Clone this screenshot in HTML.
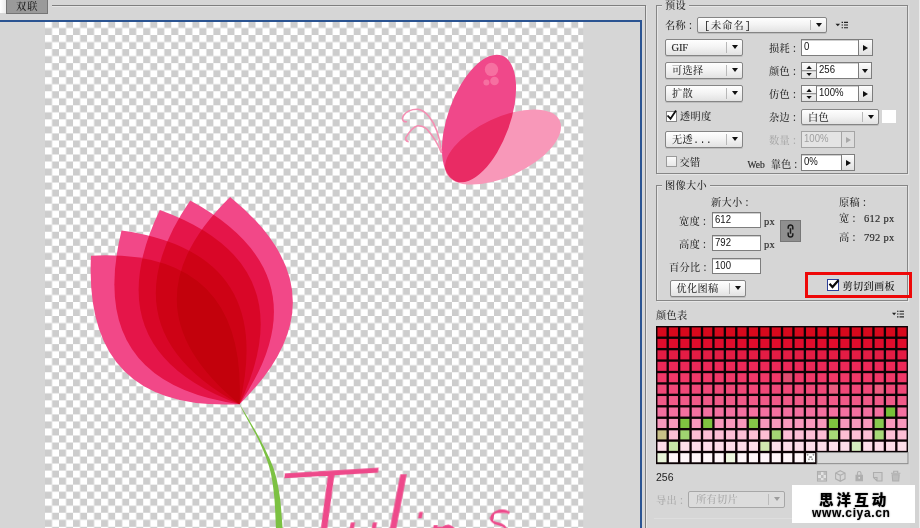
<!DOCTYPE html>
<html lang="zh-CN"><head><meta charset="utf-8"><title>存储为 Web 所用格式</title>
<style>
html,body{margin:0;padding:0;background:#d6d6d6}
html{overflow:hidden}
body{width:920px;height:528px;overflow:hidden;position:relative;background:#d6d6d6;
 font-family:"Liberation Sans","Noto Serif CJK SC",serif;font-size:10.5px;color:#2a2a2a;line-height:12px}
.a{position:absolute;white-space:nowrap}
.cj{font-family:"Liberation Mono","Noto Serif CJK SC",serif;font-size:10.2px;letter-spacing:0.3px;margin-top:1.5px;font-weight:500}
.lt{font-family:"Liberation Serif",serif;letter-spacing:0.3px;font-size:10.5px;font-weight:normal;-webkit-text-stroke:0.15px #2a2a2a}
.co{margin-left:2px}
.dd{position:absolute;box-sizing:border-box;border:1px solid #858585;border-radius:2px;
 background:linear-gradient(#fefefe,#f4f4f4 45%,#e2e2e2);box-shadow:0 1px 0 #bdbdbd}
.dd i{position:absolute;top:2px;bottom:2px;width:1px;background:#b8b8b8;right:15px}
.dd b{position:absolute;right:4px;top:5px;width:0;height:0;border-left:3.5px solid transparent;border-right:3.5px solid transparent;border-top:4.5px solid #111}
.dd span{position:absolute;left:6px;top:1.5px}
.in{position:absolute;box-sizing:border-box;border:1px solid #7d7d7d;background:#fff;box-shadow:inset 0 1px 0 #cfcfcf}
.in span{position:absolute;left:2.300px;top:1.400px;font-family:"Liberation Sans",sans-serif;font-size:10.300px;color:#111;transform:scaleX(0.93);transform-origin:0 0}
.ab{position:absolute;box-sizing:border-box;border:1px solid #7d7d7d;border-left:none;background:linear-gradient(#fdfdfd,#e0e0e0)}
.ab b{position:absolute;left:4px;top:4.6px;width:0;height:0;border-top:3.400px solid transparent;border-bottom:3.400px solid transparent;border-left:5px solid #111}
.ab b.d{left:3px;top:5.5px;border-left:3.5px solid transparent;border-right:3.5px solid transparent;border-top:4.5px solid #111;border-bottom:none}
.fs{position:absolute;box-sizing:border-box;border:1px solid #868686;box-shadow:1px 1px 0 #e6e6e6, inset 1px 1px 0 #e6e6e6}
.lg{position:absolute;background:#d6d6d6;padding:0 3px}
.cb{position:absolute;box-sizing:border-box;width:11px;height:11px;border:1px solid #6a6a6a;background:#fff}
.pt{fill:#f24888;mix-blend-mode:multiply}
</style></head><body>

<!-- left panel chrome -->
<div class="a" style="left:0;top:0;width:6px;height:13px;background:linear-gradient(90deg,#fff,#ececec)"></div>
<div class="a" style="left:6px;top:-1px;width:42px;height:14.5px;box-sizing:border-box;background:#9a9a9a;border:1px solid #757575"></div>
<div class="a cj" style="left:16px;top:0px;color:#1a1a1a;letter-spacing:1px">双联</div>
<div class="a" style="left:52px;top:5px;width:594px;height:1px;background:#7f7f7f"></div>
<div class="a" style="left:52px;top:6px;width:593px;height:1px;background:#e6e6e6"></div>
<div class="a" style="left:645px;top:5px;width:1px;height:523px;background:#7f7f7f"></div>
<div class="a" style="left:646px;top:6px;width:1px;height:522px;background:#e6e6e6"></div>
<!-- canvas -->
<svg class="a" style="left:0;top:0" width="920" height="528"><defs><pattern id="ck" x="45" y="21" width="14.032" height="14.05" patternUnits="userSpaceOnUse"><rect width="14.032" height="14.05" fill="#fff"/><rect x="7.016" width="7.016" height="7.025" fill="#cdcdcd"/><rect y="7.025" width="7.016" height="7.025" fill="#cdcdcd"/></pattern></defs><rect x="45" y="21" width="538.2" height="507" fill="url(#ck)"/></svg>
<div class="a" style="left:0;top:20px;width:642px;height:2px;background:#2b5492"></div>
<div class="a" style="left:640px;top:20px;width:2px;height:508px;background:#2b5492"></div>

<svg class="a" style="left:0;top:0" width="920" height="528" viewBox="0 0 920 528">
<defs><filter id="thin" x="-5%" y="-5%" width="110%" height="110%"><feMorphology operator="erode" radius="2"/></filter><clipPath id="cv"><rect x="45" y="22" width="538.200" height="506"/></clipPath></defs>
<g clip-path="url(#cv)">
<path d="M239.5 404C240.5 406.0 242.2 409.7 245.5 416.0C248.8 422.3 255.5 433.3 259.5 442.0C263.5 450.7 267.2 459.6 269.6 468.3C272.0 477.0 273.0 485.7 274.0 494.4C275.0 503.1 275.3 514.6 275.6 520.5C275.9 526.4 275.9 528.4 276.0 530.0L282.6 530C282.5 528.4 282.5 526.4 282.0 520.5C281.5 514.6 280.9 503.1 279.5 494.4C278.1 485.7 276.5 477.0 273.5 468.3C270.5 459.6 265.9 450.7 261.5 442.0C257.1 433.3 250.5 422.3 246.8 416.0C243.1 409.7 240.7 406.0 239.5 404.0Z" fill="#7cc142"/>
<g style="isolation:isolate">
<path class="pt" d="M239.5 404.2Q247.3 247.9 91.0 255.7Q83.2 412.0 239.5 404.2Z"/>
<path class="pt" d="M239.5 404.2Q276.4 252.2 121.5 230.5Q84.5 382.6 239.5 404.2Z"/>
<path class="pt" d="M239.5 404.2Q307.0 263.0 159.8 209.9Q92.3 351.1 239.5 404.2Z"/>
<path class="pt" d="M239.5 404.2Q327.6 275.1 190.2 200.6Q102.1 329.7 239.5 404.2Z"/>
<path class="pt" d="M239.5 404.2Q350.7 295.3 230.1 196.9Q118.9 305.8 239.5 404.2Z"/>
</g>
<!-- butterfly -->
<g style="isolation:isolate">
<ellipse cx="503" cy="147" rx="62.5" ry="29.5" transform="rotate(-25 503 147)" fill="#f898b9" style="mix-blend-mode:multiply"/>
<ellipse cx="479" cy="118.5" rx="31" ry="67" transform="rotate(20 479 118.5)" fill="#f0488a" style="mix-blend-mode:multiply"/>
</g>
<circle cx="491.5" cy="69.4" r="6.7" fill="#f670a1"/>
<circle cx="486.4" cy="82.4" r="3" fill="#f670a1"/>
<circle cx="494.5" cy="81" r="4.3" fill="#f670a1"/>
<path d="M441.6 151.8Q438.5 128 429 116.6Q424 110 417.700 109.200Q408 109 403.500 115.500Q401.500 119 403.500 121Q405 122 406.400 121.700" fill="none" stroke="#f58fb3" stroke-width="1.6" stroke-linecap="round"/>
<path d="M441.300 152.500Q436.500 140 426.800 129Q422.500 125.500 417.700 125.700Q412 127 405.800 137.600Q405 140.500 408 141.600" fill="none" stroke="#f58fb3" stroke-width="1.6" stroke-linecap="round"/>
<!-- Tulips script -->
<text font-family="'DejaVu Sans Light','DejaVu Sans',sans-serif" font-weight="200" fill="#ee4a8b" stroke="#ee4a8b" stroke-width="0" transform="translate(97.2 0) skewX(-11)" filter="url(#thin)"><tspan x="282.500" y="594.500" font-size="167" rotate="-3.5" stroke-width="2.3">T</tspan><tspan x="349.5" y="556" font-size="60" stroke-width="5.5" rotate="0">u</tspan><tspan x="377.3" y="594" font-size="157" stroke-width="3.3">l</tspan><tspan x="403.2" y="625" font-size="150" stroke-width="1">i</tspan><tspan x="432.4" y="559" font-size="60" stroke-width="5.5">p</tspan><tspan x="490" y="538" font-size="50" stroke-width="5.5">s</tspan></text>
</g>
</svg>

<!-- ============ right panel ============ -->
<div class="a" style="left:909.500px;top:0;width:9.500px;height:528px;background:#d3d3d3"></div>
<div class="a" style="left:919px;top:0;width:1px;height:528px;background:#ececec"></div>
<div class="fs" style="left:656px;top:5px;width:252px;height:169px"></div>
<div class="lg cj" style="left:662px;top:-1px">预设</div>

<div class="a cj" style="left:665px;top:19px">名称<span class="co">：</span></div>
<div class="dd" style="left:697px;top:17px;width:130px;height:16px"><span class="cj" style="letter-spacing:1px">[未命名]</span><i></i><b></b></div>
<svg class="a" style="left:834px;top:20px" width="16" height="10"><path d="M1.500 3.700h4.600l-2.300 2.600z" fill="#222"/><path d="M7.600 2.300h1.400M7.600 5h1.400M7.600 7.700h1.400M10 2.300h4M10 5h4M10 7.700h4" stroke="#222" stroke-width="1.150"/></svg>

<div class="dd" style="left:665px;top:39.0px;width:78px;height:17px"><span class="cj lt" style="left:5.500px;top:0.700px;letter-spacing:-0.200px">GIF</span><i></i><b></b></div>
<div class="dd" style="left:665px;top:62.0px;width:78px;height:17px"><span class="cj">可选择</span><i></i><b></b></div>
<div class="dd" style="left:665px;top:85.0px;width:78px;height:17px"><span class="cj">扩散</span><i></i><b></b></div>
<div class="cb" style="left:665.500px;top:110.700px;border-color:#858585"></div>
<svg class="a" style="left:665.300px;top:108.300px" width="14" height="14"><path d="M2.5 7.5l3 3.2l5.5 -8.2" fill="none" stroke="#111" stroke-width="1.8"/></svg>
<div class="a cj" style="left:680px;top:110px">透明度</div>
<div class="dd" style="left:665px;top:131px;width:78px;height:16.5px"><span class="cj">无透...</span><i></i><b></b></div>
<div class="cb" style="left:665.500px;top:156px;border-color:#9a9a9a;background:linear-gradient(#fafafa,#e8e8e8)"></div>
<div class="a cj" style="left:679.500px;top:156px">交错</div>

<div class="a cj" style="left:769px;top:42px">损耗<span class="co">：</span></div>
<div class="in" style="left:801px;top:39.0px;width:58px;height:17px"><span>0</span></div>
<div class="ab" style="left:859px;top:39.0px;width:14px;height:17px"><b></b></div>

<div class="a cj" style="left:769px;top:65px">颜色<span class="co">：</span></div>
<div class="in" style="left:801px;top:62.0px;width:58px;height:17px"><span style="left:17px">256</span></div>
<div class="a" style="left:802px;top:63px;width:14px;height:15px;border-right:1px solid #7d7d7d;background:linear-gradient(#fdfdfd,#e2e2e2)"></div>
<svg class="a" style="left:802px;top:62.700px" width="14" height="16"><path d="M4.4 5.9h5.4l-2.7 -3.1zM4.4 9.9h5.4l-2.7 3.1z" fill="#111"/><path d="M0 7.75h14" stroke="#7d7d7d" stroke-width="1"/></svg>
<div class="ab" style="left:859px;top:62.0px;width:13px;height:17px"><b class="d"></b></div>

<div class="a cj" style="left:769px;top:88px">仿色<span class="co">：</span></div>
<div class="in" style="left:801px;top:85.0px;width:58px;height:17px"><span style="left:17px">100%</span></div>
<div class="a" style="left:802px;top:86px;width:14px;height:15px;border-right:1px solid #7d7d7d;background:linear-gradient(#fdfdfd,#e2e2e2)"></div>
<svg class="a" style="left:802px;top:85.700px" width="14" height="16"><path d="M4.4 5.9h5.4l-2.7 -3.1zM4.4 9.9h5.4l-2.7 3.1z" fill="#111"/><path d="M0 7.75h14" stroke="#7d7d7d" stroke-width="1"/></svg>
<div class="ab" style="left:859px;top:85.0px;width:14px;height:17px"><b></b></div>

<div class="a cj" style="left:769px;top:111px">杂边<span class="co">：</span></div>
<div class="dd" style="left:801px;top:108.500px;width:77.500px;height:16px"><span class="cj" style="top:1.500px">白色</span><i></i><b style="top:5.500px"></b></div>
<div class="a" style="left:882px;top:109.800px;width:13.800px;height:13px;background:#fff"></div>

<div class="a cj" style="left:769px;top:134px;color:#a9a9a9">数量<span class="co">：</span></div>
<div class="in" style="left:801px;top:131px;width:41px;height:16.5px;background:#e4e4e4;border-color:#a5a5a5;box-shadow:none"><span style="color:#a0a0a0">100%</span></div>
<div class="ab" style="left:842px;top:131px;width:13px;height:16.5px;border-color:#a5a5a5;background:#dedede"><b style="border-left-color:#a8a8a8"></b></div>

<div class="a cj" style="left:747.500px;top:157px;letter-spacing:0"><span class="lt" style="font-size:9.500px;letter-spacing:0">Web</span> 靠色<span class="co">：</span></div>
<div class="in" style="left:801px;top:154px;width:41px;height:16.5px"><span>0%</span></div>
<div class="ab" style="left:842px;top:154px;width:13px;height:16.5px"><b></b></div>

<!-- image size -->
<div class="fs" style="left:656px;top:185px;width:252px;height:116px"></div>
<div class="lg cj" style="left:662px;top:179.5px">图像大小</div>
<div class="a cj" style="left:711px;top:196px">新大小<span class="co">：</span></div>
<div class="a cj" style="left:839px;top:196px">原稿<span class="co">：</span></div>
<div class="a cj" style="left:679px;top:215px">宽度<span class="co">：</span></div>
<div class="in" style="left:712px;top:211.5px;width:49px;height:16.500px"><span>612</span></div>
<div class="a cj" style="left:764px;top:214.200px"><span class="lt">px</span></div>
<div class="a cj" style="left:839px;top:211px">宽<span class="co">：</span><span class="lt" style="margin-left:2px">612 px</span></div>
<div class="a cj" style="left:679px;top:238px">高度<span class="co">：</span></div>
<div class="in" style="left:712px;top:234.5px;width:49px;height:16.500px"><span>792</span></div>
<div class="a cj" style="left:764px;top:237.200px"><span class="lt">px</span></div>
<div class="a cj" style="left:839px;top:230px">高<span class="co">：</span><span class="lt" style="margin-left:2px">792 px</span></div>
<div class="a" style="left:780px;top:220px;width:21px;height:21.5px;box-sizing:border-box;background:#8f8f8f;border:1px solid #777"></div>
<svg class="a" style="left:780px;top:220px" width="21" height="22"><path d="M8.2 8.8v-1.6a2.3 2.3 0 0 1 4.6 0v2.2M12.8 13.2v1.6a2.3 2.3 0 0 1 -4.6 0v-2.2M10.5 8.3v5.4" fill="none" stroke="#1c1c1c" stroke-width="1.5"/></svg>
<div class="a cj" style="left:669px;top:261px">百分比<span class="co">：</span></div>
<div class="in" style="left:712px;top:257.5px;width:49px;height:16.500px"><span>100</span></div>
<div class="dd" style="left:669.5px;top:280px;width:76px;height:16.5px"><span class="cj" style="left:6px">优化图稿</span><i></i><b></b></div>

<div class="a" style="left:805px;top:271.800px;width:107.400px;height:26px;box-sizing:border-box;border:3px solid #ee0808"></div>
<div class="cb" style="left:827px;top:279px;width:12.300px;height:12px;border:1.500px solid #2c3f98"></div>
<svg class="a" style="left:826px;top:277px" width="15" height="15"><path d="M3.500 6.700l3 3.400l6 -6.800" fill="none" stroke="#0a0a0a" stroke-width="2.200"/></svg>
<div class="a cj" style="left:842.500px;top:280.500px;color:#111">剪切到画板</div>

<!-- colour table -->
<div class="a cj" style="left:656px;top:309px">颜色表</div>
<svg class="a" style="left:891px;top:308.5px" width="16" height="10"><path d="M1 3.800h4.200l-2.100 2.400z" fill="#222"/><path d="M6 2.200h1.500M6 5h1.500M6 7.900h1.500M8.500 2.200h4.500M8.500 5h4.500M8.500 7.900h4.500" stroke="#222" stroke-width="1.100"/></svg>
<svg class="a" style="left:0;top:0" width="920" height="528" viewBox="0 0 920 528">
<rect x="656" y="326" width="251.96" height="126.73" fill="#0c0205"/>
<rect x="656" y="451.73" width="161.02" height="12.43" fill="#0c0205"/>
<rect x="817.02" y="452.53" width="90.94" height="11.13" fill="#d9d9d9" stroke="#8b8b8b" stroke-width="1"/>
<rect x="657.45" y="327.45" width="9.1" height="9.1" fill="#d8081c"/>
<rect x="668.88" y="327.45" width="9.1" height="9.1" fill="#d8081c"/>
<rect x="680.31" y="327.45" width="9.1" height="9.1" fill="#d8081c"/>
<rect x="691.74" y="327.45" width="9.1" height="9.1" fill="#d8081c"/>
<rect x="703.17" y="327.45" width="9.1" height="9.1" fill="#d8081c"/>
<rect x="714.60" y="327.45" width="9.1" height="9.1" fill="#d8081c"/>
<rect x="726.03" y="327.45" width="9.1" height="9.1" fill="#d8081c"/>
<rect x="737.46" y="327.45" width="9.1" height="9.1" fill="#d8081c"/>
<rect x="748.89" y="327.45" width="9.1" height="9.1" fill="#d8081c"/>
<rect x="760.32" y="327.45" width="9.1" height="9.1" fill="#d8081c"/>
<rect x="771.75" y="327.45" width="9.1" height="9.1" fill="#d8081c"/>
<rect x="783.18" y="327.45" width="9.1" height="9.1" fill="#d8081c"/>
<rect x="794.61" y="327.45" width="9.1" height="9.1" fill="#d8081c"/>
<rect x="806.04" y="327.45" width="9.1" height="9.1" fill="#d8081c"/>
<rect x="817.47" y="327.45" width="9.1" height="9.1" fill="#d8081c"/>
<rect x="828.90" y="327.45" width="9.1" height="9.1" fill="#d8081c"/>
<rect x="840.33" y="327.45" width="9.1" height="9.1" fill="#d8081c"/>
<rect x="851.76" y="327.45" width="9.1" height="9.1" fill="#d8081c"/>
<rect x="863.19" y="327.45" width="9.1" height="9.1" fill="#d8081c"/>
<rect x="874.62" y="327.45" width="9.1" height="9.1" fill="#d8081c"/>
<rect x="886.05" y="327.45" width="9.1" height="9.1" fill="#d8081c"/>
<rect x="897.48" y="327.45" width="9.1" height="9.1" fill="#d8081c"/>
<rect x="657.45" y="338.88" width="9.1" height="9.1" fill="#e00c2c"/>
<rect x="668.88" y="338.88" width="9.1" height="9.1" fill="#e00c2c"/>
<rect x="680.31" y="338.88" width="9.1" height="9.1" fill="#e00c2c"/>
<rect x="691.74" y="338.88" width="9.1" height="9.1" fill="#e00c2c"/>
<rect x="703.17" y="338.88" width="9.1" height="9.1" fill="#e00c2c"/>
<rect x="714.60" y="338.88" width="9.1" height="9.1" fill="#e00c2c"/>
<rect x="726.03" y="338.88" width="9.1" height="9.1" fill="#e00c2c"/>
<rect x="737.46" y="338.88" width="9.1" height="9.1" fill="#e00c2c"/>
<rect x="748.89" y="338.88" width="9.1" height="9.1" fill="#e00c2c"/>
<rect x="760.32" y="338.88" width="9.1" height="9.1" fill="#e00c2c"/>
<rect x="771.75" y="338.88" width="9.1" height="9.1" fill="#e00c2c"/>
<rect x="783.18" y="338.88" width="9.1" height="9.1" fill="#e00c2c"/>
<rect x="794.61" y="338.88" width="9.1" height="9.1" fill="#e00c2c"/>
<rect x="806.04" y="338.88" width="9.1" height="9.1" fill="#e00c2c"/>
<rect x="817.47" y="338.88" width="9.1" height="9.1" fill="#e00c2c"/>
<rect x="828.90" y="338.88" width="9.1" height="9.1" fill="#e00c2c"/>
<rect x="840.33" y="338.88" width="9.1" height="9.1" fill="#e00c2c"/>
<rect x="851.76" y="338.88" width="9.1" height="9.1" fill="#e00c2c"/>
<rect x="863.19" y="338.88" width="9.1" height="9.1" fill="#e00c2c"/>
<rect x="874.62" y="338.88" width="9.1" height="9.1" fill="#e00c2c"/>
<rect x="886.05" y="338.88" width="9.1" height="9.1" fill="#e00c2c"/>
<rect x="897.48" y="338.88" width="9.1" height="9.1" fill="#e00c2c"/>
<rect x="657.45" y="350.31" width="9.1" height="9.1" fill="#e41c44"/>
<rect x="668.88" y="350.31" width="9.1" height="9.1" fill="#e41c44"/>
<rect x="680.31" y="350.31" width="9.1" height="9.1" fill="#e41c44"/>
<rect x="691.74" y="350.31" width="9.1" height="9.1" fill="#e41c44"/>
<rect x="703.17" y="350.31" width="9.1" height="9.1" fill="#e41c44"/>
<rect x="714.60" y="350.31" width="9.1" height="9.1" fill="#e41c44"/>
<rect x="726.03" y="350.31" width="9.1" height="9.1" fill="#e41c44"/>
<rect x="737.46" y="350.31" width="9.1" height="9.1" fill="#e41c44"/>
<rect x="748.89" y="350.31" width="9.1" height="9.1" fill="#e41c44"/>
<rect x="760.32" y="350.31" width="9.1" height="9.1" fill="#e41c44"/>
<rect x="771.75" y="350.31" width="9.1" height="9.1" fill="#e41c44"/>
<rect x="783.18" y="350.31" width="9.1" height="9.1" fill="#e41c44"/>
<rect x="794.61" y="350.31" width="9.1" height="9.1" fill="#e41c44"/>
<rect x="806.04" y="350.31" width="9.1" height="9.1" fill="#e41c44"/>
<rect x="817.47" y="350.31" width="9.1" height="9.1" fill="#e41c44"/>
<rect x="828.90" y="350.31" width="9.1" height="9.1" fill="#e41c44"/>
<rect x="840.33" y="350.31" width="9.1" height="9.1" fill="#e41c44"/>
<rect x="851.76" y="350.31" width="9.1" height="9.1" fill="#e41c44"/>
<rect x="863.19" y="350.31" width="9.1" height="9.1" fill="#e41c44"/>
<rect x="874.62" y="350.31" width="9.1" height="9.1" fill="#e41c44"/>
<rect x="886.05" y="350.31" width="9.1" height="9.1" fill="#e41c44"/>
<rect x="897.48" y="350.31" width="9.1" height="9.1" fill="#e41c44"/>
<rect x="657.45" y="361.74" width="9.1" height="9.1" fill="#ec2858"/>
<rect x="668.88" y="361.74" width="9.1" height="9.1" fill="#ec2858"/>
<rect x="680.31" y="361.74" width="9.1" height="9.1" fill="#ec2858"/>
<rect x="691.74" y="361.74" width="9.1" height="9.1" fill="#ec2858"/>
<rect x="703.17" y="361.74" width="9.1" height="9.1" fill="#ec2858"/>
<rect x="714.60" y="361.74" width="9.1" height="9.1" fill="#ec2858"/>
<rect x="726.03" y="361.74" width="9.1" height="9.1" fill="#ec2858"/>
<rect x="737.46" y="361.74" width="9.1" height="9.1" fill="#ec2858"/>
<rect x="748.89" y="361.74" width="9.1" height="9.1" fill="#ec2858"/>
<rect x="760.32" y="361.74" width="9.1" height="9.1" fill="#ec2858"/>
<rect x="771.75" y="361.74" width="9.1" height="9.1" fill="#ec2858"/>
<rect x="783.18" y="361.74" width="9.1" height="9.1" fill="#ec2858"/>
<rect x="794.61" y="361.74" width="9.1" height="9.1" fill="#ec2858"/>
<rect x="806.04" y="361.74" width="9.1" height="9.1" fill="#ec2858"/>
<rect x="817.47" y="361.74" width="9.1" height="9.1" fill="#ec2858"/>
<rect x="828.90" y="361.74" width="9.1" height="9.1" fill="#ec2858"/>
<rect x="840.33" y="361.74" width="9.1" height="9.1" fill="#ec2858"/>
<rect x="851.76" y="361.74" width="9.1" height="9.1" fill="#ec2858"/>
<rect x="863.19" y="361.74" width="9.1" height="9.1" fill="#ec2858"/>
<rect x="874.62" y="361.74" width="9.1" height="9.1" fill="#ec2858"/>
<rect x="886.05" y="361.74" width="9.1" height="9.1" fill="#ec2858"/>
<rect x="897.48" y="361.74" width="9.1" height="9.1" fill="#ec2858"/>
<rect x="657.45" y="373.17" width="9.1" height="9.1" fill="#f03868"/>
<rect x="668.88" y="373.17" width="9.1" height="9.1" fill="#f03868"/>
<rect x="680.31" y="373.17" width="9.1" height="9.1" fill="#f03868"/>
<rect x="691.74" y="373.17" width="9.1" height="9.1" fill="#f03868"/>
<rect x="703.17" y="373.17" width="9.1" height="9.1" fill="#f03868"/>
<rect x="714.60" y="373.17" width="9.1" height="9.1" fill="#f03868"/>
<rect x="726.03" y="373.17" width="9.1" height="9.1" fill="#f03868"/>
<rect x="737.46" y="373.17" width="9.1" height="9.1" fill="#f03868"/>
<rect x="748.89" y="373.17" width="9.1" height="9.1" fill="#f03868"/>
<rect x="760.32" y="373.17" width="9.1" height="9.1" fill="#f03868"/>
<rect x="771.75" y="373.17" width="9.1" height="9.1" fill="#f03868"/>
<rect x="783.18" y="373.17" width="9.1" height="9.1" fill="#e04c70"/>
<rect x="794.61" y="373.17" width="9.1" height="9.1" fill="#f03868"/>
<rect x="806.04" y="373.17" width="9.1" height="9.1" fill="#f03868"/>
<rect x="817.47" y="373.17" width="9.1" height="9.1" fill="#f03868"/>
<rect x="828.90" y="373.17" width="9.1" height="9.1" fill="#f03868"/>
<rect x="840.33" y="373.17" width="9.1" height="9.1" fill="#f03868"/>
<rect x="851.76" y="373.17" width="9.1" height="9.1" fill="#f03868"/>
<rect x="863.19" y="373.17" width="9.1" height="9.1" fill="#f03868"/>
<rect x="874.62" y="373.17" width="9.1" height="9.1" fill="#f03868"/>
<rect x="886.05" y="373.17" width="9.1" height="9.1" fill="#f03868"/>
<rect x="897.48" y="373.17" width="9.1" height="9.1" fill="#f03868"/>
<rect x="657.45" y="384.60" width="9.1" height="9.1" fill="#f04878"/>
<rect x="668.88" y="384.60" width="9.1" height="9.1" fill="#f04878"/>
<rect x="680.31" y="384.60" width="9.1" height="9.1" fill="#f04878"/>
<rect x="691.74" y="384.60" width="9.1" height="9.1" fill="#f04878"/>
<rect x="703.17" y="384.60" width="9.1" height="9.1" fill="#f04878"/>
<rect x="714.60" y="384.60" width="9.1" height="9.1" fill="#f04878"/>
<rect x="726.03" y="384.60" width="9.1" height="9.1" fill="#f04878"/>
<rect x="737.46" y="384.60" width="9.1" height="9.1" fill="#f04878"/>
<rect x="748.89" y="384.60" width="9.1" height="9.1" fill="#f04878"/>
<rect x="760.32" y="384.60" width="9.1" height="9.1" fill="#f04878"/>
<rect x="771.75" y="384.60" width="9.1" height="9.1" fill="#f04878"/>
<rect x="783.18" y="384.60" width="9.1" height="9.1" fill="#f04878"/>
<rect x="794.61" y="384.60" width="9.1" height="9.1" fill="#f04878"/>
<rect x="806.04" y="384.60" width="9.1" height="9.1" fill="#f04878"/>
<rect x="817.47" y="384.60" width="9.1" height="9.1" fill="#f04878"/>
<rect x="828.90" y="384.60" width="9.1" height="9.1" fill="#e85c80"/>
<rect x="840.33" y="384.60" width="9.1" height="9.1" fill="#f04878"/>
<rect x="851.76" y="384.60" width="9.1" height="9.1" fill="#f04878"/>
<rect x="863.19" y="384.60" width="9.1" height="9.1" fill="#f04878"/>
<rect x="874.62" y="384.60" width="9.1" height="9.1" fill="#ec5c80"/>
<rect x="886.05" y="384.60" width="9.1" height="9.1" fill="#f04878"/>
<rect x="897.48" y="384.60" width="9.1" height="9.1" fill="#f04878"/>
<rect x="657.45" y="396.03" width="9.1" height="9.1" fill="#f05a88"/>
<rect x="668.88" y="396.03" width="9.1" height="9.1" fill="#f05a88"/>
<rect x="680.31" y="396.03" width="9.1" height="9.1" fill="#f05a88"/>
<rect x="691.74" y="396.03" width="9.1" height="9.1" fill="#f05a88"/>
<rect x="703.17" y="396.03" width="9.1" height="9.1" fill="#f05a88"/>
<rect x="714.60" y="396.03" width="9.1" height="9.1" fill="#f05a88"/>
<rect x="726.03" y="396.03" width="9.1" height="9.1" fill="#f05a88"/>
<rect x="737.46" y="396.03" width="9.1" height="9.1" fill="#f05a88"/>
<rect x="748.89" y="396.03" width="9.1" height="9.1" fill="#f05a88"/>
<rect x="760.32" y="396.03" width="9.1" height="9.1" fill="#f05a88"/>
<rect x="771.75" y="396.03" width="9.1" height="9.1" fill="#f05a88"/>
<rect x="783.18" y="396.03" width="9.1" height="9.1" fill="#f05a88"/>
<rect x="794.61" y="396.03" width="9.1" height="9.1" fill="#f05a88"/>
<rect x="806.04" y="396.03" width="9.1" height="9.1" fill="#f05a88"/>
<rect x="817.47" y="396.03" width="9.1" height="9.1" fill="#f05a88"/>
<rect x="828.90" y="396.03" width="9.1" height="9.1" fill="#f05a88"/>
<rect x="840.33" y="396.03" width="9.1" height="9.1" fill="#f05a88"/>
<rect x="851.76" y="396.03" width="9.1" height="9.1" fill="#f05a88"/>
<rect x="863.19" y="396.03" width="9.1" height="9.1" fill="#f05a88"/>
<rect x="874.62" y="396.03" width="9.1" height="9.1" fill="#f05a88"/>
<rect x="886.05" y="396.03" width="9.1" height="9.1" fill="#f05a88"/>
<rect x="897.48" y="396.03" width="9.1" height="9.1" fill="#f05a88"/>
<rect x="657.45" y="407.46" width="9.1" height="9.1" fill="#f470a0"/>
<rect x="668.88" y="407.46" width="9.1" height="9.1" fill="#f470a0"/>
<rect x="680.31" y="407.46" width="9.1" height="9.1" fill="#f470a0"/>
<rect x="691.74" y="407.46" width="9.1" height="9.1" fill="#f470a0"/>
<rect x="703.17" y="407.46" width="9.1" height="9.1" fill="#f470a0"/>
<rect x="714.60" y="407.46" width="9.1" height="9.1" fill="#f470a0"/>
<rect x="726.03" y="407.46" width="9.1" height="9.1" fill="#f470a0"/>
<rect x="737.46" y="407.46" width="9.1" height="9.1" fill="#f470a0"/>
<rect x="748.89" y="407.46" width="9.1" height="9.1" fill="#f470a0"/>
<rect x="760.32" y="407.46" width="9.1" height="9.1" fill="#f470a0"/>
<rect x="771.75" y="407.46" width="9.1" height="9.1" fill="#f470a0"/>
<rect x="783.18" y="407.46" width="9.1" height="9.1" fill="#f470a0"/>
<rect x="794.61" y="407.46" width="9.1" height="9.1" fill="#f470a0"/>
<rect x="806.04" y="407.46" width="9.1" height="9.1" fill="#f470a0"/>
<rect x="817.47" y="407.46" width="9.1" height="9.1" fill="#f470a0"/>
<rect x="828.90" y="407.46" width="9.1" height="9.1" fill="#f470a0"/>
<rect x="840.33" y="407.46" width="9.1" height="9.1" fill="#f470a0"/>
<rect x="851.76" y="407.46" width="9.1" height="9.1" fill="#f470a0"/>
<rect x="863.19" y="407.46" width="9.1" height="9.1" fill="#f470a0"/>
<rect x="874.62" y="407.46" width="9.1" height="9.1" fill="#f470a0"/>
<rect x="886.05" y="407.46" width="9.1" height="9.1" fill="#78c038"/>
<rect x="897.48" y="407.46" width="9.1" height="9.1" fill="#f470a0"/>
<rect x="657.45" y="418.89" width="9.1" height="9.1" fill="#f898bc"/>
<rect x="668.88" y="418.89" width="9.1" height="9.1" fill="#f898bc"/>
<rect x="680.31" y="418.89" width="9.1" height="9.1" fill="#80c440"/>
<rect x="691.74" y="418.89" width="9.1" height="9.1" fill="#f898bc"/>
<rect x="703.17" y="418.89" width="9.1" height="9.1" fill="#80c440"/>
<rect x="714.60" y="418.89" width="9.1" height="9.1" fill="#f898bc"/>
<rect x="726.03" y="418.89" width="9.1" height="9.1" fill="#f898bc"/>
<rect x="737.46" y="418.89" width="9.1" height="9.1" fill="#f898bc"/>
<rect x="748.89" y="418.89" width="9.1" height="9.1" fill="#84c448"/>
<rect x="760.32" y="418.89" width="9.1" height="9.1" fill="#f898bc"/>
<rect x="771.75" y="418.89" width="9.1" height="9.1" fill="#f898bc"/>
<rect x="783.18" y="418.89" width="9.1" height="9.1" fill="#f898bc"/>
<rect x="794.61" y="418.89" width="9.1" height="9.1" fill="#f898bc"/>
<rect x="806.04" y="418.89" width="9.1" height="9.1" fill="#f898bc"/>
<rect x="817.47" y="418.89" width="9.1" height="9.1" fill="#f898bc"/>
<rect x="828.90" y="418.89" width="9.1" height="9.1" fill="#80c440"/>
<rect x="840.33" y="418.89" width="9.1" height="9.1" fill="#f898bc"/>
<rect x="851.76" y="418.89" width="9.1" height="9.1" fill="#f898bc"/>
<rect x="863.19" y="418.89" width="9.1" height="9.1" fill="#f898bc"/>
<rect x="874.62" y="418.89" width="9.1" height="9.1" fill="#88c850"/>
<rect x="886.05" y="418.89" width="9.1" height="9.1" fill="#f898bc"/>
<rect x="897.48" y="418.89" width="9.1" height="9.1" fill="#f898bc"/>
<rect x="657.45" y="430.32" width="9.1" height="9.1" fill="#c8c088"/>
<rect x="668.88" y="430.32" width="9.1" height="9.1" fill="#fcbed4"/>
<rect x="680.31" y="430.32" width="9.1" height="9.1" fill="#a0d470"/>
<rect x="691.74" y="430.32" width="9.1" height="9.1" fill="#fcbed4"/>
<rect x="703.17" y="430.32" width="9.1" height="9.1" fill="#fcbed4"/>
<rect x="714.60" y="430.32" width="9.1" height="9.1" fill="#fcbed4"/>
<rect x="726.03" y="430.32" width="9.1" height="9.1" fill="#fcbed4"/>
<rect x="737.46" y="430.32" width="9.1" height="9.1" fill="#fcbed4"/>
<rect x="748.89" y="430.32" width="9.1" height="9.1" fill="#fcbed4"/>
<rect x="760.32" y="430.32" width="9.1" height="9.1" fill="#fcbed4"/>
<rect x="771.75" y="430.32" width="9.1" height="9.1" fill="#a4d474"/>
<rect x="783.18" y="430.32" width="9.1" height="9.1" fill="#fcbed4"/>
<rect x="794.61" y="430.32" width="9.1" height="9.1" fill="#fcbed4"/>
<rect x="806.04" y="430.32" width="9.1" height="9.1" fill="#fcbed4"/>
<rect x="817.47" y="430.32" width="9.1" height="9.1" fill="#fcbed4"/>
<rect x="828.90" y="430.32" width="9.1" height="9.1" fill="#a8d878"/>
<rect x="840.33" y="430.32" width="9.1" height="9.1" fill="#fcbed4"/>
<rect x="851.76" y="430.32" width="9.1" height="9.1" fill="#fcbed4"/>
<rect x="863.19" y="430.32" width="9.1" height="9.1" fill="#fcbed4"/>
<rect x="874.62" y="430.32" width="9.1" height="9.1" fill="#a8d878"/>
<rect x="886.05" y="430.32" width="9.1" height="9.1" fill="#fcbed4"/>
<rect x="897.48" y="430.32" width="9.1" height="9.1" fill="#fcbed4"/>
<rect x="657.45" y="441.75" width="9.1" height="9.1" fill="#fddee9"/>
<rect x="668.88" y="441.75" width="9.1" height="9.1" fill="#c8e8a8"/>
<rect x="680.31" y="441.75" width="9.1" height="9.1" fill="#fddee9"/>
<rect x="691.74" y="441.75" width="9.1" height="9.1" fill="#fddee9"/>
<rect x="703.17" y="441.75" width="9.1" height="9.1" fill="#fddee9"/>
<rect x="714.60" y="441.75" width="9.1" height="9.1" fill="#fddee9"/>
<rect x="726.03" y="441.75" width="9.1" height="9.1" fill="#fddee9"/>
<rect x="737.46" y="441.75" width="9.1" height="9.1" fill="#fddee9"/>
<rect x="748.89" y="441.75" width="9.1" height="9.1" fill="#fddee9"/>
<rect x="760.32" y="441.75" width="9.1" height="9.1" fill="#d0e8b0"/>
<rect x="771.75" y="441.75" width="9.1" height="9.1" fill="#fddee9"/>
<rect x="783.18" y="441.75" width="9.1" height="9.1" fill="#fddee9"/>
<rect x="794.61" y="441.75" width="9.1" height="9.1" fill="#fddee9"/>
<rect x="806.04" y="441.75" width="9.1" height="9.1" fill="#fddee9"/>
<rect x="817.47" y="441.75" width="9.1" height="9.1" fill="#fddee9"/>
<rect x="828.90" y="441.75" width="9.1" height="9.1" fill="#fddee9"/>
<rect x="840.33" y="441.75" width="9.1" height="9.1" fill="#fddee9"/>
<rect x="851.76" y="441.75" width="9.1" height="9.1" fill="#d8f0c0"/>
<rect x="863.19" y="441.75" width="9.1" height="9.1" fill="#fddee9"/>
<rect x="874.62" y="441.75" width="9.1" height="9.1" fill="#fddee9"/>
<rect x="886.05" y="441.75" width="9.1" height="9.1" fill="#fddee9"/>
<rect x="897.48" y="441.75" width="9.1" height="9.1" fill="#fddee9"/>
<rect x="657.45" y="453.18" width="9.1" height="9.1" fill="#e8f4d8"/>
<rect x="668.88" y="453.18" width="9.1" height="9.1" fill="#fff6f9"/>
<rect x="680.31" y="453.18" width="9.1" height="9.1" fill="#fff6f9"/>
<rect x="691.74" y="453.18" width="9.1" height="9.1" fill="#fff6f9"/>
<rect x="703.17" y="453.18" width="9.1" height="9.1" fill="#fff6f9"/>
<rect x="714.60" y="453.18" width="9.1" height="9.1" fill="#fff6f9"/>
<rect x="726.03" y="453.18" width="9.1" height="9.1" fill="#eef8e0"/>
<rect x="737.46" y="453.18" width="9.1" height="9.1" fill="#fff6f9"/>
<rect x="748.89" y="453.18" width="9.1" height="9.1" fill="#fff6f9"/>
<rect x="760.32" y="453.18" width="9.1" height="9.1" fill="#fff6f9"/>
<rect x="771.75" y="453.18" width="9.1" height="9.1" fill="#fff6f9"/>
<rect x="783.18" y="453.18" width="9.1" height="9.1" fill="#fff6f9"/>
<rect x="794.61" y="453.18" width="9.1" height="9.1" fill="#fff6f9"/>
<rect x="806.04" y="453.18" width="9.1" height="9.1" fill="#fff"/>
<path d="M807.04 454.18l7 7m0 -7l-7 7" stroke="#999" stroke-width="1.6" stroke-dasharray="1.6 1.6"/>
</svg>

<div class="a" style="left:656px;top:471px;font-family:'Liberation Sans',sans-serif;font-size:10.5px;color:#222">256</div>
<svg class="a" style="left:815px;top:468px" width="90" height="16" fill="none" stroke="#aeaeae" stroke-width="1.1">
<rect x="2.500" y="3.500" width="9" height="9.500" fill="#e2e2e2"/><path d="M3 4h3v3h-3zM6 7h2.500v3h-2.500zM8.500 4h2.500v3h-2.500zM3 10h3v2.500h-3zM8.500 10h2.500v2.500h-2.500z" fill="#bcbcbc" stroke="none"/>
<path d="M25.300 2.700l4.700 2.300v5.800l-4.700 2.500l-4.700 -2.500v-5.800zM20.600 5l4.700 2.300l4.700 -2.300M25.300 7.300v6"/>
<rect x="41" y="7.300" width="6.400" height="5.400" fill="#aeaeae"/><path d="M42.400 7.300v-2a1.800 1.800 0 0 1 3.600 0v2"/><circle cx="44.200" cy="9.800" r="0.900" fill="#e4e4e4" stroke="none"/>
<path d="M58.500 4.500h8.500v8.500h-5l-3.500 -3.500zM58.500 9.500h3.500v3.500" fill="#cfcfcf"/>
<path d="M76 5.300h9.400M78.700 5v-1.700h4v1.700" /><path d="M77.200 6.800h7l-0.500 6.200h-6z" fill="#bdbdbd"/>
</svg>

<div class="a cj" style="left:656px;top:494px;color:#ababab">导出<span class="co">：</span></div>
<div class="dd" style="left:688px;top:490.500px;width:96.500px;height:17px;border-color:#a7a7a7;background:#dcdcdc;box-shadow:none"><span class="cj" style="color:#a9a9a9;left:7px;top:2px">所有切片</span><i style="background:#bbb"></i><b style="border-top-color:#9c9c9c"></b></div>
<div class="a" style="left:654px;top:518px;width:138px;height:1px;background:#dedede"></div>

<!-- watermark -->
<div class="a" style="left:791.800px;top:485px;width:123.300px;height:37.900px;background:#fff"></div>
<div class="a" style="left:819px;top:491.500px;font-family:'Liberation Sans','Noto Sans CJK SC',sans-serif;font-weight:900;font-size:14.500px;line-height:17px;letter-spacing:3.100px;color:#000;text-shadow:0 0 1.500px #777">思洋互动</div>
<div class="a" style="left:812px;top:506.700px;font-family:'Liberation Sans',sans-serif;font-weight:bold;font-size:12px;line-height:13px;letter-spacing:0.620px;color:#000;text-shadow:0 0 1.500px #777">www.ciya.cn</div>

</body></html>
